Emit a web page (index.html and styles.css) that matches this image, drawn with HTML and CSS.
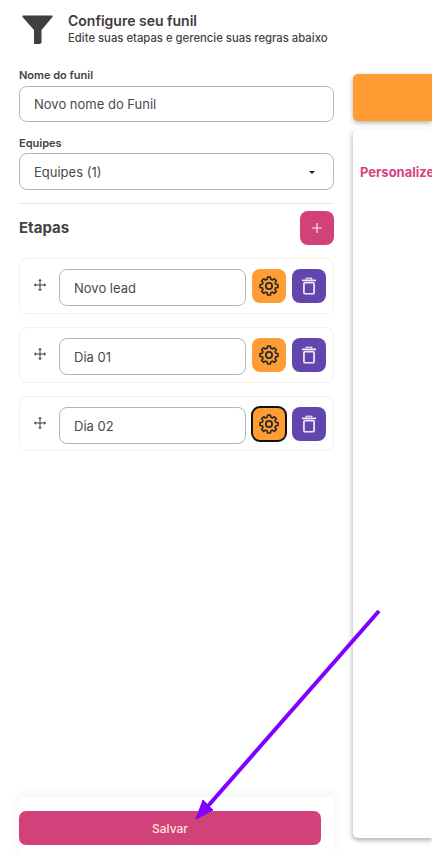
FILE: index.html
```html
<!DOCTYPE html>
<html lang="pt-BR">
<head>
<meta charset="utf-8">
<title>Configure seu funil</title>
<link rel="stylesheet" href="styles.css">
</head>
<body>
<div class="app">
  <main class="left">
    <header class="head">
      <svg class="funnel" viewBox="0 0 31 29" width="31" height="29"><path d="M0.5 0.5H30.5V2L19.5 15V28L17.5 29H12V15L0.5 2Z" fill="#3f3f3f"/></svg>
      <div class="head-text">
        <h1>Configure seu funil</h1>
        <p>Edite suas etapas e gerencie suas regras abaixo</p>
      </div>
    </header>

    <label class="lbl lbl-name">Nome do funil</label>
    <div class="field">Novo nome do Funil</div>
    <label class="lbl lbl-team">Equipes</label>
    <div class="field select">Equipes (1)<span class="caret"></span></div>
    <div class="rule"></div>

    <div class="stages-head">
      <h2>Etapas</h2>
      <button class="sq pink"><svg viewBox="0 0 12 12" width="12" height="12"><path d="M6 1V11M1 6H11" stroke="#fbe9ef" stroke-width="1.2" fill="none"/></svg></button>
    </div>

    <div class="stage">
      <svg class="move" viewBox="0 0 12 12" width="12" height="12"><path d="M6 .5V11.5M.5 6H11.5M4.6 2 6 .5 7.4 2M4.6 10 6 11.5 7.4 10M2 4.6.5 6 2 7.4M10 4.6 11.5 6 10 7.4" stroke="#333" stroke-width="1" fill="none"/></svg>
      <div class="field small">Novo lead</div>
      <button class="sq orange"><svg class="gear" viewBox="0 0 24 24" width="22" height="22"><use href="#gear"/></svg></button>
      <button class="sq purple"><svg viewBox="0 0 16 20" width="14" height="18"><use href="#trash"/></svg></button>
    </div>
    <div class="stage">
      <svg class="move" viewBox="0 0 12 12" width="12" height="12"><path d="M6 .5V11.5M.5 6H11.5M4.6 2 6 .5 7.4 2M4.6 10 6 11.5 7.4 10M2 4.6.5 6 2 7.4M10 4.6 11.5 6 10 7.4" stroke="#333" stroke-width="1" fill="none"/></svg>
      <div class="field small">Dia 01</div>
      <button class="sq orange"><svg class="gear" viewBox="0 0 24 24" width="22" height="22"><use href="#gear"/></svg></button>
      <button class="sq purple"><svg viewBox="0 0 16 20" width="14" height="18"><use href="#trash"/></svg></button>
    </div>
    <div class="stage last">
      <svg class="move" viewBox="0 0 12 12" width="12" height="12"><path d="M6 .5V11.5M.5 6H11.5M4.6 2 6 .5 7.4 2M4.6 10 6 11.5 7.4 10M2 4.6.5 6 2 7.4M10 4.6 11.5 6 10 7.4" stroke="#333" stroke-width="1" fill="none"/></svg>
      <div class="field small">Dia 02</div>
      <button class="sq orange focus"><svg class="gear" viewBox="0 0 24 24" width="22" height="22"><use href="#gear"/></svg></button>
      <button class="sq purple"><svg viewBox="0 0 16 20" width="14" height="18"><use href="#trash"/></svg></button>
    </div>

    <footer class="foot">
      <button class="save">Salvar</button>
    </footer>
  </main>

  <aside class="right">
    <div class="banner"></div>
    <div class="card"><span class="perso">Personalize</span></div>
  </aside>
</div>

<svg class="defs" width="0" height="0">
  <symbol id="gear" viewBox="0 0 24 24">
    <path d="M10.3 2.5h3.4l.5 2.6 1.9.8 2.2-1.5 2.4 2.4-1.5 2.2.8 1.9 2.6.5v3.4l-2.6.5-.8 1.9 1.5 2.2-2.4 2.4-2.2-1.5-1.9.8-.5 2.6h-3.4l-.5-2.6-1.9-.8-2.2 1.5-2.4-2.4 1.5-2.2-.8-1.9-2.6-.5v-3.4l2.6-.5.8-1.9-1.5-2.2 2.4-2.4 2.2 1.5 1.9-.8z" transform="translate(12 12) scale(.92) translate(-12 -13)" fill="none" stroke="#2c2c2c" stroke-width="2" stroke-linejoin="round"/>
    <circle cx="12" cy="12" r="3.4" fill="none" stroke="#2c2c2c" stroke-width="2"/>
  </symbol>
  <symbol id="trash" viewBox="0 0 16 20">
    <path d="M0 3.5H16" stroke="#ece6f5" stroke-width="2"/>
    <path d="M5 2.5V1H11V2.5" stroke="#ece6f5" stroke-width="1.6" fill="none"/>
    <rect x="2.2" y="6" width="11.6" height="13" rx="1.5" fill="none" stroke="#ece6f5" stroke-width="2"/>
  </symbol>
</svg>

<svg class="arrow" viewBox="0 0 432 856" width="432" height="856">
  <path d="M379 611 208 806" stroke="#7f00ff" stroke-width="4" fill="none"/>
  <path d="M196 819 203 800 213 810Z" fill="#7f00ff" stroke="#7f00ff" stroke-width="1"/>
</svg>
</body>
</html>
```
FILE: styles.css
```css
* { box-sizing: border-box; }
html, body { margin: 0; padding: 0; }
body {
  width: 432px;
  height: 856px;
  overflow: hidden;
  background: #fff;
  font-family: Inter, "Liberation Sans", sans-serif;
  color: #444;
  position: relative;
}
.app { display: flex; width: 432px; height: 856px; }
.left {
  width: 353px;
  flex: none;
  padding: 0 19px 0 19px;
  display: flex;
  flex-direction: column;
  position: relative;
}
.head { display: flex; align-items: flex-start; padding: 15px 0 0 3px; height: 68px; }
.funnel { flex: none; }
.head-text { margin-left: 15px; margin-top: -1px; }
.head h1 { margin: 0; font-size: 14px; line-height: 14px; font-weight: 600; color: #3d3d3d; }
.head p { margin: 4px 0 0; font-size: 11.3px; line-height: 13px; font-weight: 500; color: #444; white-space: nowrap; }
.lbl { display: block; font-size: 11px; line-height: 14px; font-weight: 600; color: #444; height: 18px; }
.lbl-team { margin-top: 14px; height: 17px; }
.field {
  height: 36px;
  border: 1px solid #b5b5b5;
  border-radius: 8px;
  padding-left: 14px;
  font-size: 13px;
  color: #4a4a4a;
  display: flex;
  align-items: center;
  background: #fff;
}
.select { height: 37px; position: relative; }
.caret {
  position: absolute;
  right: 18px;
  top: 17px;
  border-left: 3.5px solid transparent;
  border-right: 3.5px solid transparent;
  border-top: 3.5px solid #222;
}
.rule { height: 1px; background: #e6e6e6; margin-top: 13px; }
.stages-head { display: flex; justify-content: space-between; align-items: center; margin-top: 7px; }
.stages-head h2 { margin: 0 0 2px; font-size: 15px; font-weight: 700; color: #444; }
.sq {
  width: 34px;
  height: 34px;
  border: 0;
  border-radius: 8px;
  padding: 0;
  display: flex;
  align-items: center;
  justify-content: center;
  flex: none;
}
.pink { background: #d1427b; }
.orange { background: #ff9c33; }
.purple { background: #6246ae; }
.focus { outline: 2px solid #111; outline-offset: -1px; border-radius: 8px; }
.stage {
  height: 56px;
  margin-top: 13px;
  border: 1px solid #f8f0e6;
  border-radius: 8px;
  display: flex;
  align-items: flex-start;
  padding: 10px 7px 0 0;
  gap: 6px;
}
.last { height: 55px; }
.move { margin: 10px 7px 0 14px; flex: none; }
.small { width: 187px; height: 37px; flex: none; }
.foot {
  position: absolute;
  left: 19px;
  top: 797px;
  width: 315px;
  height: 59px;
  background: #fff;
  box-shadow: 0 -4px 12px rgba(0,0,0,.05);
  padding-top: 14px;
}
.save {
  display: block;
  width: 302px;
  height: 34px;
  border: 0;
  border-radius: 7px;
  background: #d1427b;
  color: #fbe6d8;
  font-family: inherit;
  font-size: 12px;
  font-weight: 500;
  padding: 0;
}
.right { flex: 1; display: flex; flex-direction: column; min-width: 0; }
.banner {
  height: 47px;
  margin-top: 74px;
  background: #ff9c33;
  border-radius: 5px 0 0 5px;
  box-shadow: 0 2px 5px rgba(0,0,0,.3);
}
.card {
  height: 708px;
  margin-top: 9px;
  background: #fff;
  border-radius: 5px 0 0 5px;
  box-shadow: 0 3px 4px rgba(0,0,0,.25), -3px 0 4px rgba(0,0,0,.07);
  padding: 31px 0 0 7px;
  overflow: hidden;
}
.perso { font-size: 13px; font-weight: 700; color: #d6457f; white-space: nowrap; }
.defs { position: absolute; }
.arrow { position: absolute; left: 0; top: 0; pointer-events: none; }
```
